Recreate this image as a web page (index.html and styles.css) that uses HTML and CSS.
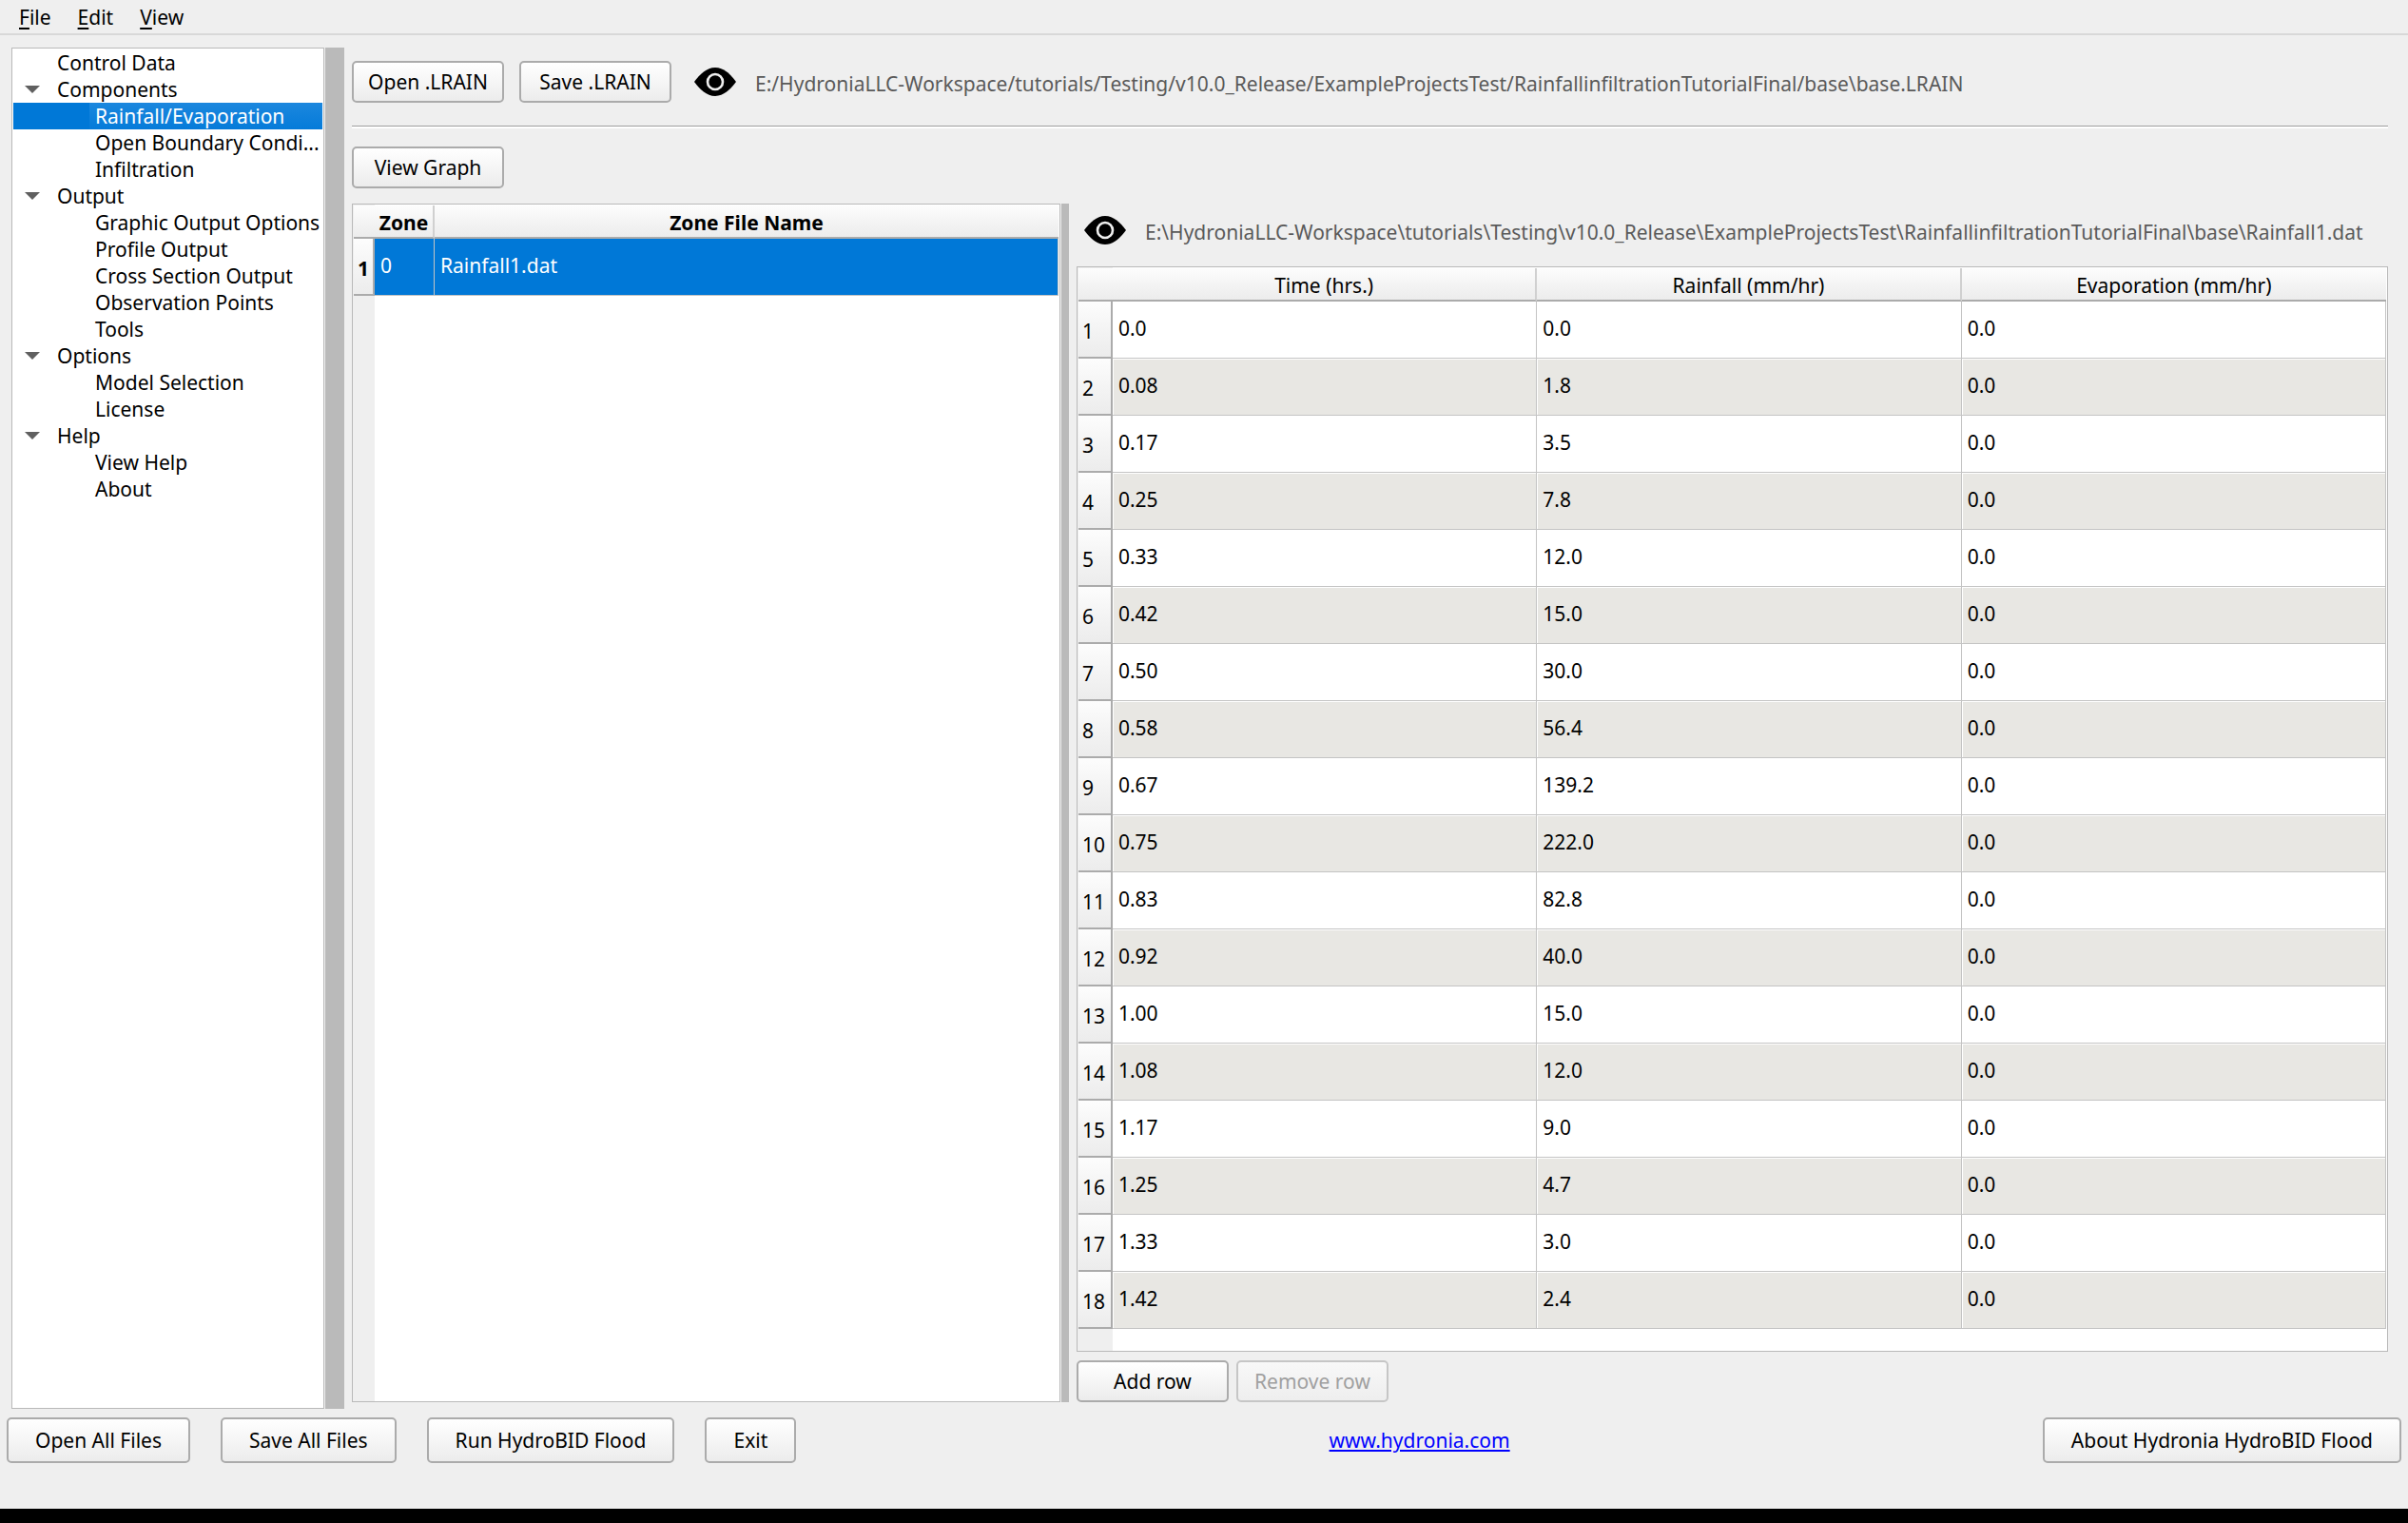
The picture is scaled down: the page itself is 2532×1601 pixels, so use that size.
FILE: index.html
```html
<!DOCTYPE html>
<html lang="en">

<head>
  <meta charset="utf-8">
  <title>HydroBID Flood</title>
  <link rel="stylesheet" href="styles.css">
</head>

<body>
  <nav class="menubar">
    <button><u>F</u>ile</button>
    <button><u>E</u>dit</button>
    <button><u>V</u>iew</button>
  </nav>

  <div class="workspace">
    <ul class="tree">
      <li><span class="node">Control Data</span></li>
      <li>
        <span class="node"><svg class="arrow" viewBox="0 0 16 8"><path d="M0 0h16L8 8z" /></svg>Components</span>
        <ul>
          <li class="selected"><span class="leaf">Rainfall/Evaporation</span></li>
          <li><span class="leaf">Open Boundary Condi...</span></li>
          <li><span class="leaf">Infiltration</span></li>
        </ul>
      </li>
      <li>
        <span class="node"><svg class="arrow" viewBox="0 0 16 8"><path d="M0 0h16L8 8z" /></svg>Output</span>
        <ul>
          <li><span class="leaf">Graphic Output Options</span></li>
          <li><span class="leaf">Profile Output</span></li>
          <li><span class="leaf">Cross Section Output</span></li>
          <li><span class="leaf">Observation Points</span></li>
          <li><span class="leaf">Tools</span></li>
        </ul>
      </li>
      <li>
        <span class="node"><svg class="arrow" viewBox="0 0 16 8"><path d="M0 0h16L8 8z" /></svg>Options</span>
        <ul>
          <li><span class="leaf">Model Selection</span></li>
          <li><span class="leaf">License</span></li>
        </ul>
      </li>
      <li>
        <span class="node"><svg class="arrow" viewBox="0 0 16 8"><path d="M0 0h16L8 8z" /></svg>Help</span>
        <ul>
          <li><span class="leaf">View Help</span></li>
          <li><span class="leaf">About</span></li>
        </ul>
      </li>
    </ul>
    <div class="splitter splitter-main"></div>

    <main class="editor">
      <div class="file-bar">
        <button class="btn">Open .LRAIN</button>
        <button class="btn">Save .LRAIN</button>
        <svg class="eye" viewBox="0 0 44 30">
          <path d="M0 15C6 7 13 0 22 0s16 7 22 15c-6 8-13 15-22 15S6 23 0 15z" />
          <circle cx="22" cy="15" r="8" fill="none" stroke="#efefef" stroke-width="2.6" />
        </svg>
        <span class="path">E:/HydroniaLLC-Workspace/tutorials/Testing/v10.0_Release/ExampleProjectsTest/RainfallinfiltrationTutorialFinal/base\base.LRAIN</span>
      </div>
      <hr>
      <div class="graph-bar">
        <button class="btn">View Graph</button>
      </div>

      <div class="panes">
        <div class="frame zones">
          <table>
            <colgroup>
              <col class="col-zone-num">
              <col class="col-zone">
              <col>
            </colgroup>
            <thead>
              <tr><th class="corner"></th><th>Zone</th><th>Zone File Name</th></tr>
            </thead>
            <tbody>
              <tr class="selected"><th>1</th><td>0</td><td>Rainfall1.dat</td></tr>
            </tbody>
          </table>
        </div>
        <div class="splitter splitter-pane"></div>

        <section class="series">
          <div class="series-file">
            <svg class="eye" viewBox="0 0 44 30">
              <path d="M0 15C6 7 13 0 22 0s16 7 22 15c-6 8-13 15-22 15S6 23 0 15z" />
              <circle cx="22" cy="15" r="8" fill="none" stroke="#efefef" stroke-width="2.6" />
            </svg>
            <span class="path">E:\HydroniaLLC-Workspace\tutorials\Testing\v10.0_Release\ExampleProjectsTest\RainfallinfiltrationTutorialFinal\base\Rainfall1.dat</span>
          </div>
          <div class="frame rain">
            <table>
              <colgroup>
                <col class="col-num">
                <col>
                <col>
                <col>
              </colgroup>
              <thead>
                <tr><th class="corner"></th><th>Time (hrs.)</th><th>Rainfall (mm/hr)</th><th>Evaporation (mm/hr)</th></tr>
              </thead>
              <tbody>
                <tr><th>1</th><td>0.0</td><td>0.0</td><td>0.0</td></tr>
                <tr><th>2</th><td>0.08</td><td>1.8</td><td>0.0</td></tr>
                <tr><th>3</th><td>0.17</td><td>3.5</td><td>0.0</td></tr>
                <tr><th>4</th><td>0.25</td><td>7.8</td><td>0.0</td></tr>
                <tr><th>5</th><td>0.33</td><td>12.0</td><td>0.0</td></tr>
                <tr><th>6</th><td>0.42</td><td>15.0</td><td>0.0</td></tr>
                <tr><th>7</th><td>0.50</td><td>30.0</td><td>0.0</td></tr>
                <tr><th>8</th><td>0.58</td><td>56.4</td><td>0.0</td></tr>
                <tr><th>9</th><td>0.67</td><td>139.2</td><td>0.0</td></tr>
                <tr><th>10</th><td>0.75</td><td>222.0</td><td>0.0</td></tr>
                <tr><th>11</th><td>0.83</td><td>82.8</td><td>0.0</td></tr>
                <tr><th>12</th><td>0.92</td><td>40.0</td><td>0.0</td></tr>
                <tr><th>13</th><td>1.00</td><td>15.0</td><td>0.0</td></tr>
                <tr><th>14</th><td>1.08</td><td>12.0</td><td>0.0</td></tr>
                <tr><th>15</th><td>1.17</td><td>9.0</td><td>0.0</td></tr>
                <tr><th>16</th><td>1.25</td><td>4.7</td><td>0.0</td></tr>
                <tr><th>17</th><td>1.33</td><td>3.0</td><td>0.0</td></tr>
                <tr><th>18</th><td>1.42</td><td>2.4</td><td>0.0</td></tr>
              </tbody>
            </table>
          </div>
          <div class="row-actions">
            <button class="btn">Add row</button>
            <button class="btn" disabled>Remove row</button>
          </div>
        </section>
      </div>
    </main>
  </div>

  <footer class="bottom-bar">
    <button class="btn">Open All Files</button>
    <button class="btn">Save All Files</button>
    <button class="btn">Run HydroBID Flood</button>
    <button class="btn">Exit</button>
    <div class="site"><a href="#">www.hydronia.com</a></div>
    <button class="btn">About Hydronia HydroBID Flood</button>
  </footer>
</body>

</html>
```
FILE: styles.css
```css
:root {
  --window: #efefef;
  --base: #ffffff;
  --alternate: #e8e7e3;
  --highlight: #0078d7;
  --frame: #b9b9b9;
  --grid: #c4c4c4;
  --edge: #ababab;
  --text: #000000;
  --muted: #5a5a5a;
  --raised: linear-gradient(#fdfdfd, #f4f4f4 50%, #ececec);
}

* {
  box-sizing: border-box;
  margin: 0;
  padding: 0;
}

body {
  display: flex;
  flex-direction: column;
  min-height: 100vh;
  font-family: "Noto Sans", Tahoma, sans-serif;
  font-size: 21px;
  line-height: 28px;
  color: var(--text);
  background: var(--window);
  border-bottom: 15px solid #000;
}

button {
  font: inherit;
  color: inherit;
}

/* menu */

.menubar {
  display: flex;
  gap: 28px;
  height: 37px;
  padding: 0 20px;
  border-bottom: 2px solid #d8d8d8;
}

.menubar button {
  border: none;
  background: none;
}

.menubar u {
  text-underline-offset: 3px;
}

/* buttons */

.btn {
  min-width: 160px;
  height: 44px;
  padding: 0 12px;
  border: 2px solid var(--edge);
  border-radius: 5px;
  background: linear-gradient(#ffffff, #ececec);
  white-space: nowrap;
}

.btn:disabled {
  color: #a0a0a0;
  border-color: #c6c6c6;
  background: linear-gradient(#f8f8f8, #eeeeee);
}

/* tree */

.workspace {
  flex: 1;
  display: flex;
  padding: 13px 21px 0 12px;
}

.tree {
  width: 329px;
  padding: 1px;
  border: 1px solid var(--frame);
  background: var(--base);
  list-style: none;
}

.tree ul {
  list-style: none;
}

.node,
.leaf {
  display: flex;
  align-items: center;
  height: 28px;
  white-space: nowrap;
}

.node {
  position: relative;
  padding-left: 46px;
}

.leaf {
  margin-left: 80px;
  padding-left: 6px;
}

.arrow {
  position: absolute;
  left: 12px;
  width: 16px;
  height: 8px;
  fill: #606060;
}

.tree .selected {
  color: #fff;
  background: var(--highlight);
}

.tree .selected .leaf {
  background: linear-gradient(#1b87de, #057bd9);
}

.splitter {
  background: #bababa;
}

.splitter-main {
  width: 20px;
  margin: 0 8px 0 1px;
}

.splitter-pane {
  width: 8px;
  margin: 0 8px 0 1px;
}

/* editor */

.editor {
  flex: 1;
  display: flex;
  flex-direction: column;
  padding: 14px 0 7px;
}

.file-bar {
  display: flex;
  align-items: center;
  gap: 16px;
}

.eye {
  width: 44px;
  height: 30px;
  margin: 0 4px 0 8px;
}

.path {
  padding-top: 4px;
  color: var(--muted);
  white-space: nowrap;
}

hr {
  margin: 24px 0 19px;
  border: solid;
  border-width: 1px 0 2px;
  border-color: #a0a0a0 transparent #fff;
}

.graph-bar {
  margin-bottom: 16px;
}

.panes {
  flex: 1;
  display: flex;
}

.frame {
  padding: 1px;
  border: 1px solid var(--frame);
}

.zones {
  flex: 36;
  background: linear-gradient(to right, var(--window) 23px, var(--base) 23px);
}

.series {
  flex: 67;
  display: flex;
  flex-direction: column;
}

.series-file {
  display: flex;
  align-items: center;
  gap: 16px;
  height: 56px;
  margin-bottom: 10px;
}

.rain {
  flex: 1;
  margin-bottom: 9px;
  background: linear-gradient(to right, var(--window) 37px, var(--base) 37px);
}

.row-actions {
  display: flex;
  gap: 8px;
}

/* tables */

table {
  width: 100%;
  table-layout: fixed;
  border-collapse: separate;
  border-spacing: 0;
}

.col-num {
  width: 36px;
}

.col-zone-num {
  width: 22px;
}

.col-zone {
  width: 63px;
}

thead th {
  height: 35px;
  padding-top: 3px;
  border-right: 2px solid #d0d0d0;
  border-bottom: 2px solid var(--edge);
  background: var(--raised);
  font-weight: normal;
}

thead .corner,
thead th:last-child {
  border-right: none;
}

tbody th {
  height: 60px;
  padding: 4px 4px 0;
  border-right: 2px solid var(--edge);
  border-bottom: 2px solid var(--edge);
  background: var(--raised);
  font-weight: normal;
  text-align: left;
}

td {
  height: 60px;
  padding: 0 6px 3px;
  border-right: 1px solid var(--grid);
  border-bottom: 1px solid var(--grid);
  background: var(--base);
}

tbody tr:nth-child(even) td {
  background: var(--alternate);
  box-shadow: inset 1px 1px #fff;
}

.zones th {
  font-weight: bold;
}

.zones tr.selected td {
  color: #fff;
  background: var(--highlight);
}

/* bottom bar */

.bottom-bar {
  display: flex;
  align-items: center;
  gap: 32px;
  padding: 9px 7px 48px;
}

.bottom-bar .btn {
  min-width: 96px;
  height: 48px;
  padding: 0 28px;
}

.site {
  flex: 1;
  text-align: center;
}

.site a {
  color: #0000ff;
}
```
